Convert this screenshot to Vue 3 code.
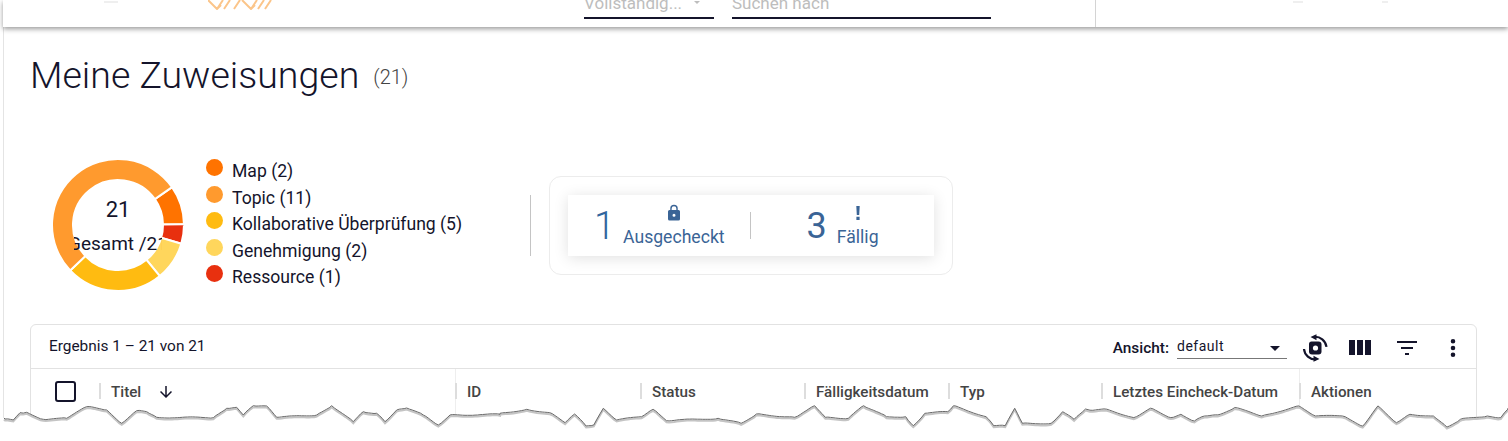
<template>
  <div class="page">
    <header class="topbar">
      <i class="hint hint-left"></i>
      <svg class="logo" width="64" height="10" viewBox="0 0 64 10">
        <path d="M0 0l9 9 4-4M15 0l-6 9M22 0l-6 9M32 0l-6 9M34 0l9 9 4-4M49 0l-6 9M56 0l-6 9M63 0l-6 9" fill="none" stroke="#fbc58a" stroke-width="2" />
      </svg>
      <div class="field field-select"><span>Vollständig...</span><i class="mini-caret"></i></div>
      <div class="field field-search"><span>Suchen nach</span></div>
      <div class="bar-line"></div>
      <i class="hint hint-r1"></i>
      <i class="hint hint-r2"></i>
    </header>

    <main class="content">
      <div class="title-row">
        <h1>Meine Zuweisungen</h1>
        <span class="count">(21)</span>
      </div>

      <section class="summary">
        <div class="donut">
          <svg width="132" height="132" viewBox="0 0 132 132">
            <path v-for="seg in segments" :key="seg.label" :d="seg.path" :fill="seg.color" stroke="#fff" stroke-width="2" />
          </svg>
          <div class="donut-center">
            <div class="donut-num">21</div>
            <div class="donut-text">Gesamt /21</div>
          </div>
        </div>

        <ul class="legend">
          <li v-for="seg in legend" :key="seg.label">
            <i class="dot" :style="{ background: seg.color }"></i>
            <span>{{ seg.label }} ({{ seg.value }})</span>
          </li>
        </ul>

        <div class="summary-line"></div>

        <div class="stat-card">
          <div class="stat-box">
            <div class="stat stat-first">
              <span class="stat-num">1</span>
              <div class="stat-side">
                <svg width="18" height="18" viewBox="0 0 24 24"><path fill="#3a6496" d="M18 8h-1V6a5 5 0 0 0-10 0v2H6a2 2 0 0 0-2 2v10a2 2 0 0 0 2 2h12a2 2 0 0 0 2-2V10a2 2 0 0 0-2-2zm-6 9a2 2 0 1 1 0-4 2 2 0 0 1 0 4zm3.100-9H8.900V6a3.100 3.100 0 0 1 6.200 0v2z" /></svg>
                <span>Ausgecheckt</span>
              </div>
            </div>
            <div class="stat-line"></div>
            <div class="stat stat-second">
              <span class="stat-num">3</span>
              <div class="stat-side">
                <svg width="18" height="18" viewBox="0 0 18 18"><path fill="#3a6496" d="M7.300 2h3.400l-.5 9H7.800zM7.400 12.800h3.200V16H7.400z" /></svg>
                <span>Fällig</span>
              </div>
            </div>
          </div>
        </div>
      </section>

      <section class="table-card">
        <div class="toolbar">
          <span class="result">Ergebnis 1 – 21 von 21</span>
          <div class="tools">
            <span class="view-label">Ansicht:</span>
            <div class="view-select"><span>default</span><i class="caret"></i></div>
            <svg class="tool tool-cam" width="28" height="28" viewBox="0 0 28 28">
              <path fill="#14142b" d="M8 10q0-2.500 2.500-2.500h7q3 0 3 3v7q0 3-3 3h-6.500q-3 0-3-3z" />
              <circle cx="14.500" cy="14" r="2.600" fill="#fff" />
              <path fill="none" stroke="#14142b" stroke-width="2.200" d="M13 2.800a11.500 11.500 0 0 1 12.500 10M3 15a11.500 11.500 0 0 0 12 10.500" />
              <path fill="#14142b" d="M9.500 3l6-2.800v6zM18.500 25l-6 2.800v-6z" />
            </svg>
            <svg class="tool tool-cols" width="24" height="24" viewBox="0 0 24 24"><path fill="#14142b" d="M1 4h6v15H1zM9 4h6v15H9zM17 4h6v15h-6z" /></svg>
            <svg class="tool tool-filter" width="24" height="24" viewBox="0 0 24 24"><path fill="#14142b" d="M2 5h20v2H2zM6 11h12v2H6zM10 17h4v2h-4z" /></svg>
            <svg class="tool tool-more" width="24" height="24" viewBox="0 0 24 24"><path fill="#14142b" d="M12 7.500a2.300 2.300 0 1 0 0-4.600 2.300 2.300 0 0 0 0 4.600zm0 2.200a2.300 2.300 0 1 0 0 4.600 2.300 2.300 0 0 0 0-4.600zm0 6.800a2.300 2.300 0 1 0 0 4.600 2.300 2.300 0 0 0 0-4.600z" /></svg>
          </div>
        </div>

        <div class="head-row">
          <div class="head-cell cell-check"><i class="checkbox"></i><b class="sep"></b></div>
          <div class="head-cell cell-title">
            <span>Titel</span>
            <svg width="18" height="18" viewBox="0 0 24 24"><path fill="#14142b" d="M13 4h-2v12.200l-5.600-5.600L4 12l8 8 8-8-1.400-1.400-5.600 5.600z" /></svg>
          </div>
          <div v-for="col in columns" :key="col" class="head-cell cell-col" :class="{ 'cell-strong': col === 'ID' || col === 'Aktionen' }">
            <b class="sep"></b><span>{{ col }}</span>
          </div>
        </div>
      </section>
    </main>

    <svg class="torn" width="1508" height="441" viewBox="0 0 1508 441">
      <path :d="tornPath" fill="#fff" />
      <path :d="tornLine" fill="none" stroke="#c4c4c4" stroke-width="2" transform="translate(0 1.5)" />
      <path :d="tornLine" fill="none" stroke="#6a6a6a" stroke-width="1" />
    </svg>
  </div>
</template>

<script setup>
const legend = [
  { label: 'Map', value: 2, color: '#ff7300' },
  { label: 'Topic', value: 11, color: '#ff9a2e' },
  { label: 'Kollaborative Überprüfung', value: 5, color: '#ffbb11' },
  { label: 'Genehmigung', value: 2, color: '#ffd65c' },
  { label: 'Ressource', value: 1, color: '#e8300f' },
]

const columns = ['ID', 'Status', 'Fälligkeitsdatum', 'Typ', 'Letztes Eincheck-Datum', 'Aktionen']

function polar(r, deg) {
  const a = (deg * Math.PI) / 180
  return `${(66 + r * Math.sin(a)).toFixed(2)} ${(66 - r * Math.cos(a)).toFixed(2)}`
}

// clockwise, starting at the upper right
const order = [legend[0], legend[4], legend[3], legend[2], legend[1]]
let angle = 55
const segments = order.map((seg) => {
  const start = angle
  const end = start + (seg.value / 21) * 360
  angle = end
  const large = end - start > 180 ? 1 : 0
  return {
    ...seg,
    path: `M${polar(66, start)} A66 66 0 ${large} 1 ${polar(66, end)} L${polar(45, end)} A45 45 0 ${large} 0 ${polar(45, start)} Z`,
  }
})

// torn paper edge, traced from the screenshot
const left = [[15,297],[40,300],[60,278],[80,277],[130,298],[200,295],[260,260],[320,270],[365,310],[410,272],[440,275],[470,292],[640,293],[680,265],[710,262],[730,285],[760,257],[800,258],[830,292],[950,285],[995,257],[1060,305],[1090,275],[1130,280],[1155,305],[1190,270],[1220,264],[1270,285],[1315,315],[1350,285],[1500,283]]
  .map(([x, y]) => [x / 3, 320 + y / 3])
const mid = [[0,160],[70,148],[130,158],[170,188],[195,162],[225,198],[245,195],[270,145],[305,180],[370,170],[400,148],[435,182],[570,175],[630,190],[670,162],[770,172],[822,137],[850,172],[910,175],[950,137],[1010,170],[1060,170],[1080,197],[1110,160],[1170,155],[1185,137],[1270,170],[1290,197],[1320,197],[1345,145],[1365,190],[1440,190],[1470,155],[1500,178],[1530,147]]
  .map(([x, y]) => [500 + x / 2.613, 360 + y / 3])
const right = [[0,268],[50,265],[130,290],[180,262],[240,290],[270,280],[310,300],[340,285],[380,282],[430,260],[510,285],[620,255],[670,285],[750,285],[810,315],[855,255],[910,305],[950,280],[1020,285],[1060,318],[1100,295],[1180,285],[1220,290],[1241,265]]
  .map(([x, y]) => [1090 + x / 2.97, 320 + y / 2.97])

const tornPoints = []
;[[4, 418], ...left, ...mid, ...right, [1508, 408]].forEach((p, i, all) => {
  tornPoints.push(p)
  const next = all[i + 1]
  if (!next) return
  const steps = Math.floor((next[0] - p[0]) / 2.5)
  for (let s = 1; s < steps; s++) {
    const t = s / steps
    const jitter = Math.sin(p[0] * 7.3 + s * 12.9) * 0.6
    tornPoints.push([p[0] + (next[0] - p[0]) * t, p[1] + (next[1] - p[1]) * t + jitter])
  }
})
const tornLine = tornPoints.map(([x, y], i) => `${i ? 'L' : 'M'}${x.toFixed(1)} ${y.toFixed(1)}`).join(' ')
const tornPath = tornLine + ' L1510 408 L1510 450 L-2 450 L-2 418 Z'
</script>

<style>
html, body { margin: 0; background: #fff; }
</style>

<style scoped>
.page {
  position: relative;
  width: 1508px;
  height: 441px;
  overflow: hidden;
  background: #fff;
  font-family: Roboto, "Liberation Sans", sans-serif;
  color: #14142b;
}
.topbar {
  height: 27px;
  margin-left: 3px;
  display: flex;
  align-items: flex-start;
  background: #fff;
  box-shadow: 0 2px 5px rgba(0,0,0,0.4);
  position: relative;
}
.hint {
  height: 2px;
  margin-top: 1px;
  background: #efefef;
  flex-shrink: 0;
}
.hint-left { width: 14px; margin-left: 101px; }
.hint-r1 { width: 10px; margin-left: 197px; }
.hint-r2 { width: 6px; margin-left: 79px; }
.logo { margin-left: 90px; flex-shrink: 0; }
.field {
  height: 17px;
  border-bottom: 2px solid #14142b;
  overflow: hidden;
  color: #bdbdbd;
  font-size: 17px;
  line-height: 6px;
  white-space: nowrap;
  display: flex;
  align-items: flex-start;
  flex-shrink: 0;
}
.field-select { width: 130px; margin-left: 312px; }
.field-search { width: 259px; margin-left: 18px; }
.mini-caret {
  margin: 1px 0 0 12px;
  border: 3px solid transparent;
  border-top-color: #bdbdbd;
}
.bar-line {
  width: 1px;
  height: 27px;
  margin-left: 104px;
  background: #d4d4d4;
  flex-shrink: 0;
}

.content {
  height: 414px;
  margin-left: 3px;
  border-left: 1px solid #e4e4e4;
  box-sizing: border-box;
  padding-left: 26px;
}
.title-row {
  display: flex;
  align-items: flex-start;
  padding-top: 25px;
  height: 47px;
}
h1 {
  margin: 0;
  font-size: 37.500px;
  line-height: 47px;
  font-weight: 300;
  color: #14142b;
}
.count {
  margin-left: 14px;
  margin-top: 13px;
  font-size: 20px;
  line-height: 24px;
  font-weight: 300;
  color: #444;
}

.summary {
  display: flex;
  align-items: flex-start;
  margin-top: 57px;
  height: 168px;
}
.donut {
  position: relative;
  width: 132px;
  height: 132px;
  margin-left: 22px;
  margin-top: 3px;
  flex-shrink: 0;
}
.donut svg { display: block; }
.donut-center {
  position: absolute;
  left: 22px;
  top: 21px;
  width: 88px;
  height: 90px;
  overflow: hidden;
  display: flex;
  flex-direction: column;
  align-items: center;
  white-space: nowrap;
}
.donut-num { font-size: 22px; line-height: 26px; margin-top: 17px; }
.donut-text { font-size: 19px; line-height: 20px; margin-top: 11px; flex-shrink: 0; }

.legend {
  list-style: none;
  margin: 2px 0 0 22px;
  padding: 0;
  width: 324px;
  flex-shrink: 0;
}
.legend li {
  display: flex;
  align-items: flex-start;
  height: 26.500px;
  font-size: 17.600px;
  line-height: 26px;
}
.dot {
  width: 17px;
  height: 17px;
  border-radius: 50%;
  margin-right: 9px;
  flex-shrink: 0;
  margin-top: 1px;
}

.summary-line {
  width: 1px;
  height: 61px;
  background: #c4c4c4;
  margin-top: 39px;
  flex-shrink: 0;
}
.stat-card {
  width: 404px;
  height: 99px;
  box-sizing: border-box;
  margin: 20px 0 0 18px;
  padding: 18px;
  border: 1px solid #ececec;
  border-radius: 12px;
  flex-shrink: 0;
}
.stat-box {
  height: 61px;
  display: flex;
  align-items: center;
  background: #fff;
  box-shadow: 0 2px 14px rgba(0,0,0,0.12);
}
.stat { display: flex; align-items: center; color: #3a6496; }
.stat-first { margin-left: 26px; }
.stat-second { margin-left: 56px; }
.stat-num {
  font-size: 38px;
  line-height: 44px;
  font-weight: 300;
  color: #31659e;
}
.stat-first .stat-num { margin-right: 8px; }
.stat-second .stat-num { font-weight: 400; margin-right: 10px; font-size: 36px; color: #3a6496; }
.stat-side {
  display: flex;
  flex-direction: column;
  align-items: center;
  font-size: 17.600px;
  line-height: 20px;
}
.stat-side svg { display: block; margin-bottom: 5px; }
.stat-line {
  width: 1px;
  height: 27px;
  margin-left: 25px;
  background: #c4c4c4;
}

.table-card {
  width: 1447px;
  height: 110px;
  box-sizing: border-box;
  border: 1px solid #e2e2e2;
  border-radius: 6px 6px 0 0;
}
.toolbar {
  height: 43px;
  display: flex;
  justify-content: space-between;
  border-bottom: 1px solid #e2e2e2;
}
.result {
  margin-left: 18px;
  margin-top: 12px;
  font-size: 15.400px;
  line-height: 18px;
  height: 18px;
}
.tools { display: flex; align-items: flex-start; position: relative; }
.view-label {
  font-size: 15.400px;
  font-weight: 500;
  line-height: 18px;
  margin-top: 14px;
  margin-right: 8px;
}
.view-select {
  width: 110px;
  height: 34px;
  box-sizing: border-box;
  border-bottom: 1px solid #777;
  font-size: 14px;
  letter-spacing: 0.5px;
  line-height: 18px;
  padding-top: 12px;
  position: relative;
}
.caret {
  position: absolute;
  right: 7px;
  top: 21px;
  border: 5px solid transparent;
  border-top-color: #14142b;
  border-bottom-width: 0;
}
.tool { flex-shrink: 0; display: block; margin-top: 10px; }
.tool-cam { margin-left: 14px; margin-top: 9px; }
.tool-cols { margin-left: 19px; margin-top: 11px; }
.tool-filter { margin-left: 23px; margin-top: 11px; }
.tool-more { margin-left: 22px; margin-right: 11px; margin-top: 11px; }

.head-row {
  height: 45px;
  display: grid;
  grid-template-columns: 69px 355px 185px 164px 144px 153px 198px 1fr;
  font-size: 15.200px;
  font-weight: 500;
  color: #444;
}
.head-cell {
  position: relative;
  display: flex;
  align-items: center;
  white-space: nowrap;
}
.sep {
  position: absolute;
  left: 0;
  top: 14px;
  width: 2px;
  height: 16px;
  background: #ddd;
}
.cell-check .sep { left: 68px; }
.checkbox {
  width: 17px;
  height: 17px;
  margin-left: 24px;
  border: 2px solid #14142b;
  border-radius: 3px;
  flex-shrink: 0;
}
.cell-title span { margin-left: 11px; }
.cell-title svg { margin-left: 16px; }
.cell-col span { margin-left: 12px; }
.cell-strong::before {
  content: "";
  position: absolute;
  left: 0;
  top: 0;
  bottom: 0;
  width: 1px;
  background: #eee;
}

.torn {
  position: absolute;
  left: 0;
  top: 0;
  pointer-events: none;
}
</style>
